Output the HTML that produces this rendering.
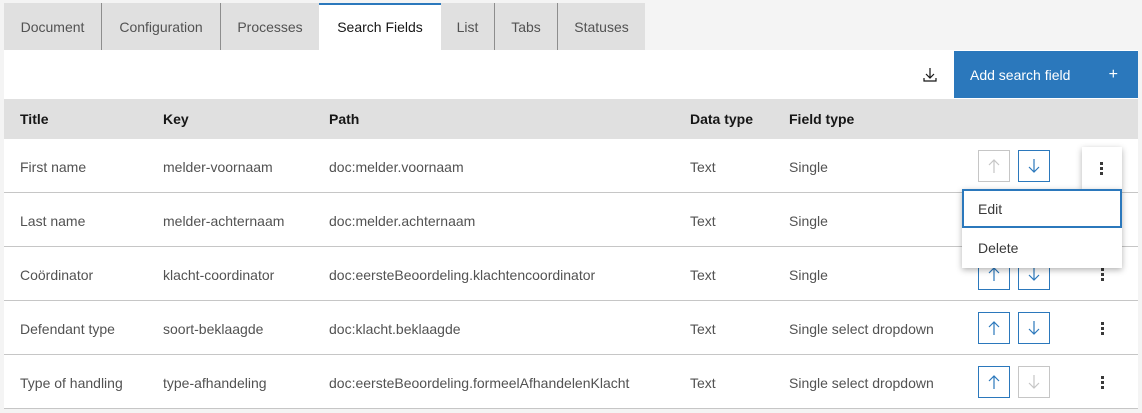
<!DOCTYPE html>
<html><head><style>
*{box-sizing:border-box;margin:0;padding:0}
body{width:1142px;height:413px;background:#f4f4f4;font-family:"Liberation Sans",sans-serif;font-size:14px;color:#525252;position:relative;overflow:hidden}
.tabs{position:absolute;left:4px;top:3px;height:47px;display:flex}
.tab{height:47px;background:#e0e0e0;color:#525252;text-align:center;line-height:48px;border-right:1px solid #8d8d8d;font-size:14px}
.tab.last{border-right:none}
.tab.active{background:#fff;color:#161616;border-top:2px solid #2b78bc;line-height:44px;border-right:none}
.bar{position:absolute;left:4px;top:50px;width:1134px;height:49px;background:#fff}
.btn{position:absolute;left:950px;top:1px;width:184px;height:47px;background:#2b78bc;color:#fff;font-size:14px;line-height:48px;padding-left:16px}
.btn span{position:absolute;right:20px;font-size:16px}
.dl{position:absolute;left:918px;top:17px}
.table{position:absolute;left:4px;top:99px;width:1134px;background:#fff}
.hdr{height:40px;background:#e0e0e0;color:#161616;font-weight:bold;position:relative}
.row{height:54px;border-bottom:1px solid #c6c6c6;position:relative}
.c{position:absolute;top:0;line-height:56px;white-space:nowrap}
.hdr .c{line-height:40px}
.c1{left:16px}.c2{left:159px}.c3{left:325px}.c4{left:686px}.c5{left:785px}
.ab{position:absolute;top:11px;width:32px;height:32px;border:1px solid #2b78bc}
.ab.dis{border-color:#c6c6c6}
.ab svg{position:absolute;left:7px;top:7px}
.keb{position:absolute;left:1097px;top:21px;width:3px}
.keb i{display:block;width:2.5px;height:2.5px;background:#393939;margin-bottom:2.5px}
.menu{position:absolute;left:962px;top:189px;width:160px;height:79px;background:#fff;box-shadow:0 2px 6px rgba(0,0,0,.3)}
.kebbox{position:absolute;left:1082px;top:147px;width:40px;height:42px;background:#fff;box-shadow:0 2px 6px rgba(0,0,0,.3)}
.mi{height:39px;line-height:41px;padding-left:16px;color:#393939}
.mi.f{border:2px solid #2b78bc;padding-left:14px;line-height:37px}
</style></head><body>
<div class="tabs">
<div class="tab" style="width:98px">Document</div><div class="tab" style="width:119px">Configuration</div><div class="tab" style="width:98px;border-right:none">Processes</div><div class="tab active" style="width:122px">Search Fields</div><div class="tab" style="width:54px">List</div><div class="tab" style="width:63px">Tabs</div><div class="tab last" style="width:87px">Statuses</div>
</div>
<div class="bar">
<svg class="dl" width="16" height="16" viewBox="0 0 16 16" fill="none" stroke="#161616" stroke-width="1.2"><path d="M8 1v10M4 7l4 4 4-4M2 11v3h12v-3"/></svg>
<div class="btn">Add search field<span>+</span></div>
</div>
<div class="table">
<div class="hdr"><div class="c c1">Title</div><div class="c c2">Key</div><div class="c c3">Path</div><div class="c c4">Data type</div><div class="c c5">Field type</div></div>
<div class="row"><div class="c c1">First name</div><div class="c c2">melder-voornaam</div><div class="c c3">doc:melder.voornaam</div><div class="c c4">Text</div><div class="c c5">Single</div>
<div class="ab dis" style="left:974px"><svg width="16" height="16" viewBox="0 0 16 16" fill="none" stroke="#c6c6c6" stroke-width="1.2"><path d="M8 2v13M3 7l5-5 5 5"/></svg></div>
<div class="ab" style="left:1014px"><svg width="16" height="16" viewBox="0 0 16 16" fill="none" stroke="#2b78bc" stroke-width="1.2"><path d="M8 1v13M3 9l5 5 5-5"/></svg></div></div>
<div class="row"><div class="c c1">Last name</div><div class="c c2">melder-achternaam</div><div class="c c3">doc:melder.achternaam</div><div class="c c4">Text</div><div class="c c5">Single</div></div>
<div class="row"><div class="c c1">Coördinator</div><div class="c c2">klacht-coordinator</div><div class="c c3">doc:eersteBeoordeling.klachtencoordinator</div><div class="c c4">Text</div><div class="c c5">Single</div>
<div class="ab" style="left:974px"><svg width="16" height="16" viewBox="0 0 16 16" fill="none" stroke="#2b78bc" stroke-width="1.2"><path d="M8 2v13M3 7l5-5 5 5"/></svg></div>
<div class="ab" style="left:1014px"><svg width="16" height="16" viewBox="0 0 16 16" fill="none" stroke="#2b78bc" stroke-width="1.2"><path d="M8 1v13M3 9l5 5 5-5"/></svg></div><div class="keb"><i></i><i></i><i></i></div></div>
<div class="row"><div class="c c1">Defendant type</div><div class="c c2">soort-beklaagde</div><div class="c c3">doc:klacht.beklaagde</div><div class="c c4">Text</div><div class="c c5">Single select dropdown</div>
<div class="ab" style="left:974px"><svg width="16" height="16" viewBox="0 0 16 16" fill="none" stroke="#2b78bc" stroke-width="1.2"><path d="M8 2v13M3 7l5-5 5 5"/></svg></div>
<div class="ab" style="left:1014px"><svg width="16" height="16" viewBox="0 0 16 16" fill="none" stroke="#2b78bc" stroke-width="1.2"><path d="M8 1v13M3 9l5 5 5-5"/></svg></div><div class="keb"><i></i><i></i><i></i></div></div>
<div class="row"><div class="c c1">Type of handling</div><div class="c c2">type-afhandeling</div><div class="c c3">doc:eersteBeoordeling.formeelAfhandelenKlacht</div><div class="c c4">Text</div><div class="c c5">Single select dropdown</div>
<div class="ab" style="left:974px"><svg width="16" height="16" viewBox="0 0 16 16" fill="none" stroke="#2b78bc" stroke-width="1.2"><path d="M8 2v13M3 7l5-5 5 5"/></svg></div>
<div class="ab dis" style="left:1014px"><svg width="16" height="16" viewBox="0 0 16 16" fill="none" stroke="#c6c6c6" stroke-width="1.2"><path d="M8 1v13M3 9l5 5 5-5"/></svg></div><div class="keb"><i></i><i></i><i></i></div></div>
</div>
<div class="kebbox"><div class="keb" style="left:18px;top:15px"><i></i><i></i><i></i></div></div>
<div class="menu"><div class="mi f">Edit</div><div class="mi">Delete</div></div>
</body></html>
